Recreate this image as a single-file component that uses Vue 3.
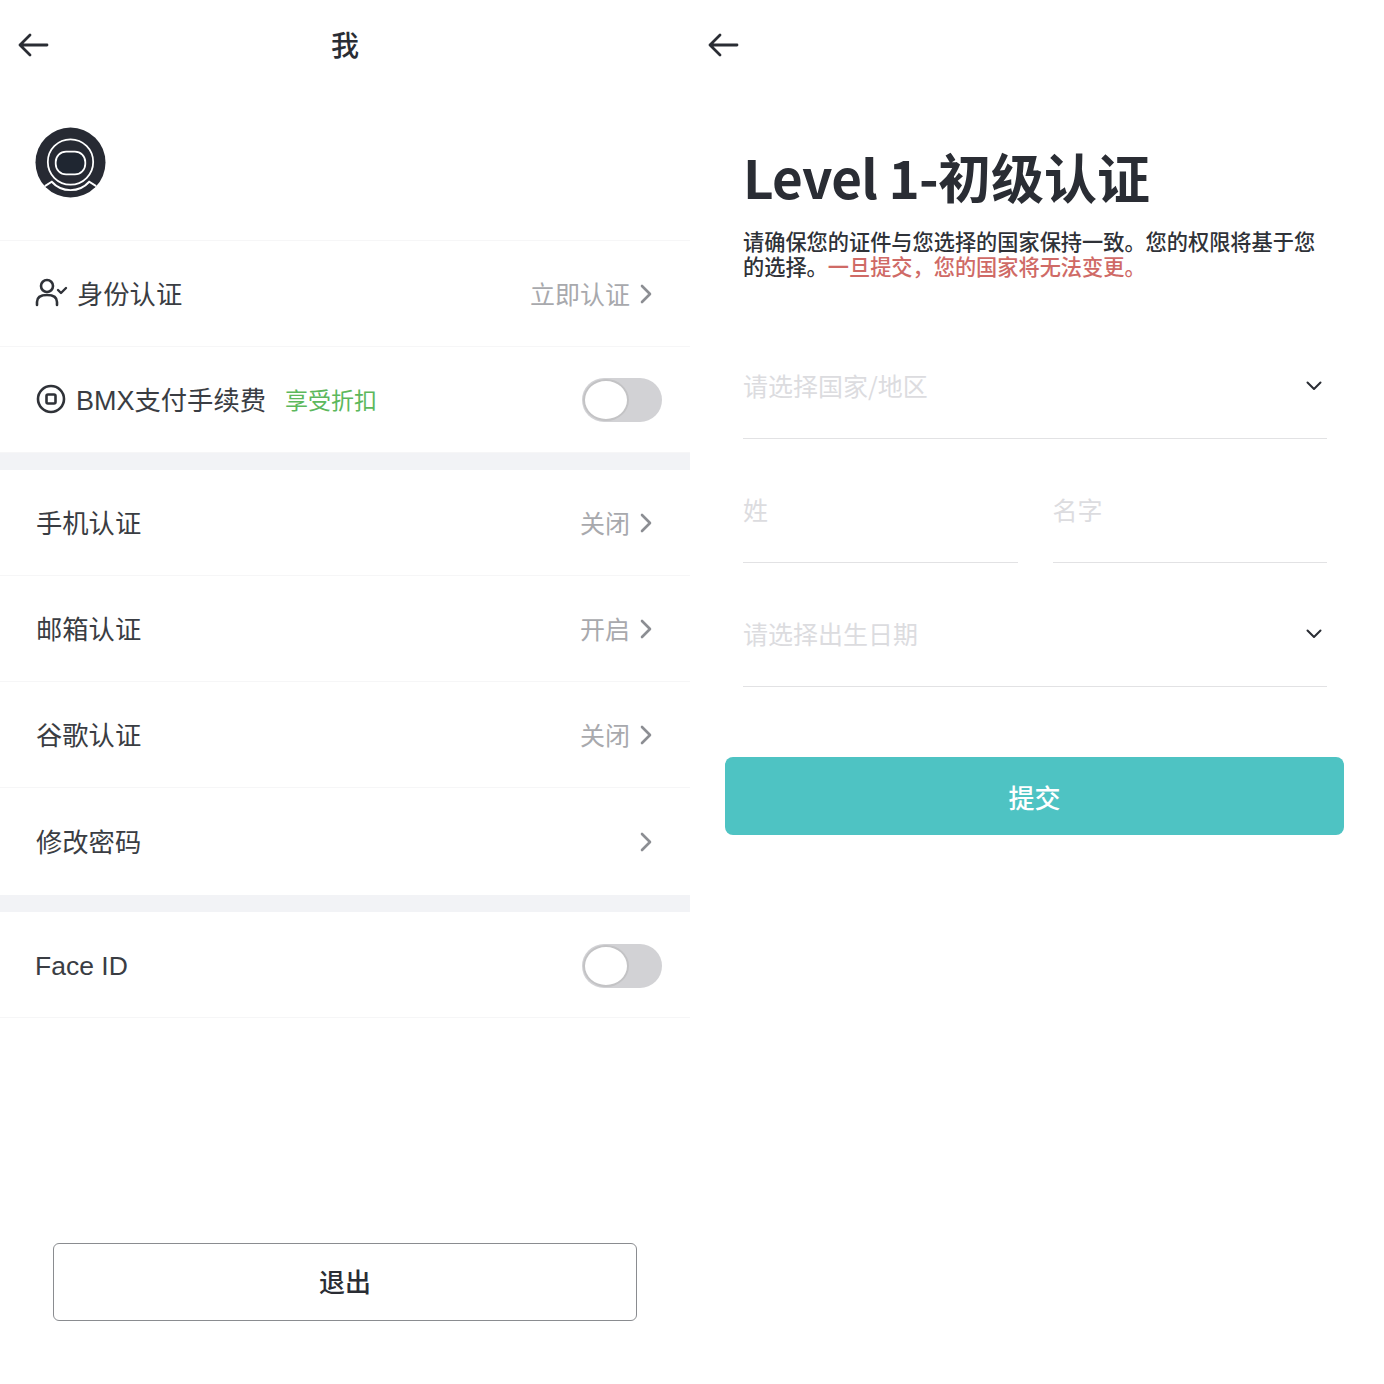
<template>
  <div class="screens">
    <section class="me">
      <header class="me-head">
        <svg class="back" viewBox="0 0 32 24" width="32" height="24">
          <path d="M2 12H29M12 2L2 12L12 22" fill="none" stroke="#2a2d34" stroke-width="2.8" stroke-linecap="round" stroke-linejoin="round" />
        </svg>
        <h2>我</h2>
      </header>

      <div class="avatar-wrap">
        <svg viewBox="0 0 72 72" width="71" height="71">
          <circle cx="36" cy="36" r="35.5" fill="#272a33" />
          <circle cx="36" cy="35.5" r="23" fill="none" stroke="#fff" stroke-width="1.8" />
          <rect x="21" y="25" width="30" height="23" rx="10.5" fill="#1f2631" stroke="#fff" stroke-width="1.8" />
          <path d="M10 60L17 55.5C21 60 27 64 36 64C45 64 51 60 55 55.5L62 60" fill="none" stroke="#fff" stroke-width="2" />
        </svg>
      </div>

      <div class="row">
        <div class="label">
          <svg class="ico user" viewBox="0 0 34 32" width="34" height="32">
            <circle cx="12" cy="9" r="6" fill="none" stroke="#2f3238" stroke-width="2.6" />
            <path d="M2 28V25C2 20 6 18 12 18C18 18 22 20 22 25V28" fill="none" stroke="#2f3238" stroke-width="2.6" stroke-linecap="round" />
            <path d="M23 13L26 16L31 11" fill="none" stroke="#2f3238" stroke-width="2.4" stroke-linecap="round" stroke-linejoin="round" />
          </svg>
          <span>身份认证</span>
        </div>
        <div class="value">立即认证<svg class="chev" viewBox="0 0 12 20" width="12" height="20"><path d="M2 2L10 10L2 18" fill="none" stroke="#8c8e93" stroke-width="2.6" stroke-linecap="round" stroke-linejoin="round" /></svg></div>
      </div>

      <div class="row">
        <div class="label">
          <svg class="ico coin" viewBox="0 0 30 30" width="30" height="30">
            <circle cx="15" cy="15" r="13" fill="none" stroke="#2f3238" stroke-width="2.6" />
            <rect x="10.5" y="10.5" width="9" height="9" rx="1.5" fill="none" stroke="#2f3238" stroke-width="2.6" />
          </svg>
          <span><span class="latin">BMX</span>支付手续费</span>
          <span class="promo">享受折扣</span>
        </div>
        <span class="toggle"><i></i></span>
      </div>

      <div class="band"></div>

      <div v-for="item in securityRows" :key="item.name" class="row" :class="{ tall: !item.state }">
        <div class="label"><span>{{ item.name }}</span></div>
        <div class="value">{{ item.state }}<svg class="chev" viewBox="0 0 12 20" width="12" height="20"><path d="M2 2L10 10L2 18" fill="none" stroke="#8c8e93" stroke-width="2.6" stroke-linecap="round" stroke-linejoin="round" /></svg></div>
      </div>

      <div class="band"></div>

      <div class="row face-row">
        <div class="label"><span class="latin face">Face ID</span></div>
        <span class="toggle"><i></i></span>
      </div>

      <button class="logout">退出</button>
    </section>

    <section class="kyc">
      <header class="kyc-head">
        <svg class="back" viewBox="0 0 32 24" width="32" height="24">
          <path d="M2 12H29M12 2L2 12L12 22" fill="none" stroke="#2a2d34" stroke-width="2.8" stroke-linecap="round" stroke-linejoin="round" />
        </svg>
      </header>

      <div class="form">
        <h1><span class="level">Level 1-</span>初级认证</h1>
        <p class="desc">请确保您的证件与您选择的国家保持一致。您的权限将基于您的选择。<em>一旦提交，您的国家将无法变更。</em></p>

        <div class="field select first-field">
          <span>请选择国家/地区</span>
          <svg viewBox="0 0 16 10" width="16" height="10"><path d="M1.5 1.5L8 8L14.5 1.5" fill="none" stroke="#2a2d34" stroke-width="2" stroke-linecap="round" stroke-linejoin="round" /></svg>
        </div>
        <div class="names">
          <div class="field"><span>姓</span></div>
          <div class="field"><span>名字</span></div>
        </div>
        <div class="field select">
          <span>请选择出生日期</span>
          <svg viewBox="0 0 16 10" width="16" height="10"><path d="M1.5 1.5L8 8L14.5 1.5" fill="none" stroke="#2a2d34" stroke-width="2" stroke-linecap="round" stroke-linejoin="round" /></svg>
        </div>
      </div>

      <button class="submit">提交</button>
    </section>
  </div>
</template>

<script setup>
const securityRows = [
  { name: '手机认证', state: '关闭' },
  { name: '邮箱认证', state: '开启' },
  { name: '谷歌认证', state: '关闭' },
  { name: '修改密码', state: '' }
]
</script>

<style>
body {
  background: #fff;
}
</style>

<style scoped>
.screens {
  display: flex;
  width: 1384px;
  height: 1384px;
  font-family: "Noto Sans CJK SC", "Liberation Sans", sans-serif;
  color: #33363c;
  background: #fff;
}

.me {
  width: 690px;
  flex: none;
}

.kyc {
  flex: 1;
  padding: 0 40px 0 35px;
  box-sizing: border-box;
}

.me-head {
  position: relative;
  height: 90px;
  display: flex;
  align-items: center;
  justify-content: center;
}

.me-head .back {
  position: absolute;
  left: 18px;
  top: 33px;
}

.me-head h2 {
  margin: -3px 0 0;
  font-size: 28px;
  font-weight: 500;
  color: #2a2d34;
}

.avatar-wrap {
  height: 113px;
  padding: 37px 0 0 35px;
  border-bottom: 1px solid #f6f6f7;
}

.avatar-wrap svg {
  display: block;
}

.row {
  height: 106px;
  box-sizing: border-box;
  padding: 0 28px 0 36px;
  border-bottom: 1px solid #f6f6f7;
  display: flex;
  align-items: center;
  justify-content: space-between;
}

.row.tall {
  height: 107px;
  border-bottom: none;
}

.label,
.value {
  margin-top: -2px;
}

.label {
  display: flex;
  align-items: center;
  font-size: 26.3px;
  color: #3a3d43;
}

.latin {
  font-family: "Liberation Sans", sans-serif;
  font-size: 27px;
}

.face {
  font-size: 26.5px;
  margin-left: -1px;
}

.face-row .label {
  margin-top: 4px;
}

.face-row .toggle {
  margin-top: 2px;
}

.ico {
  margin-right: 8px;
}

.user {
  margin-left: -1px;
}

.coin {
  margin-right: 10px;
}

.promo {
  margin-left: 19px;
  font-size: 23px;
  color: #5cb85c;
}

.value {
  display: flex;
  align-items: center;
  font-size: 25px;
  color: #a8a9ad;
  padding-right: 10px;
}

.chev {
  margin-left: 10px;
  margin-top: 2px;
}

.toggle {
  position: relative;
  width: 80px;
  height: 44px;
  border-radius: 22px;
  background: #d2d2d5;
}

.toggle i {
  position: absolute;
  left: 1px;
  top: 1px;
  width: 42px;
  height: 38px;
  border: 2px solid #c3c3c5;
  border-radius: 50%;
  background: #fff;
}

.band {
  height: 17px;
  background: #f2f3f6;
}

.logout {
  display: block;
  width: 584px;
  height: 78px;
  margin: 225px 0 0 53px;
  padding: 0 0 4px;
  border: 1px solid #8a8c90;
  border-radius: 6px;
  background: #fff;
  font-family: inherit;
  font-size: 26px;
  font-weight: 500;
  color: #2a2d34;
}

.kyc-head {
  height: 90px;
  margin-left: -17px;
  padding-top: 33px;
  box-sizing: border-box;
}

.form {
  padding: 0 17px 0 18px;
}

h1 {
  margin: 49px 0 0;
  font-size: 53px;
  line-height: 74px;
  font-weight: 700;
  color: #2a2d34;
}

.level {
  letter-spacing: -0.75px;
}

.desc {
  margin: 15px 0 0;
  font-size: 21.2px;
  line-height: 25px;
  font-weight: 500;
  color: #2f3238;
}

.desc em {
  font-style: normal;
  color: #cf6a66;
}

.field {
  display: flex;
  align-items: center;
  justify-content: space-between;
  height: 44px;
  padding-bottom: 31px;
  border-bottom: 1px solid #e2e2e4;
  font-size: 25px;
  color: #dcdcdf;
  flex: 1;
}

.select {
  margin-top: 48px;
  padding-right: 5px;
}

.first-field {
  margin-top: 85px;
}

.names {
  display: flex;
  gap: 35px;
  margin-top: 48px;
}

.field svg {
  margin-top: 2px;
}

.submit {
  display: block;
  width: 619px;
  height: 78px;
  margin-top: 70px;
  border: none;
  border-radius: 8px;
  background: #4ec3c3;
  color: #fff;
  font-family: inherit;
  font-size: 26px;
  font-weight: 500;
}
</style>
